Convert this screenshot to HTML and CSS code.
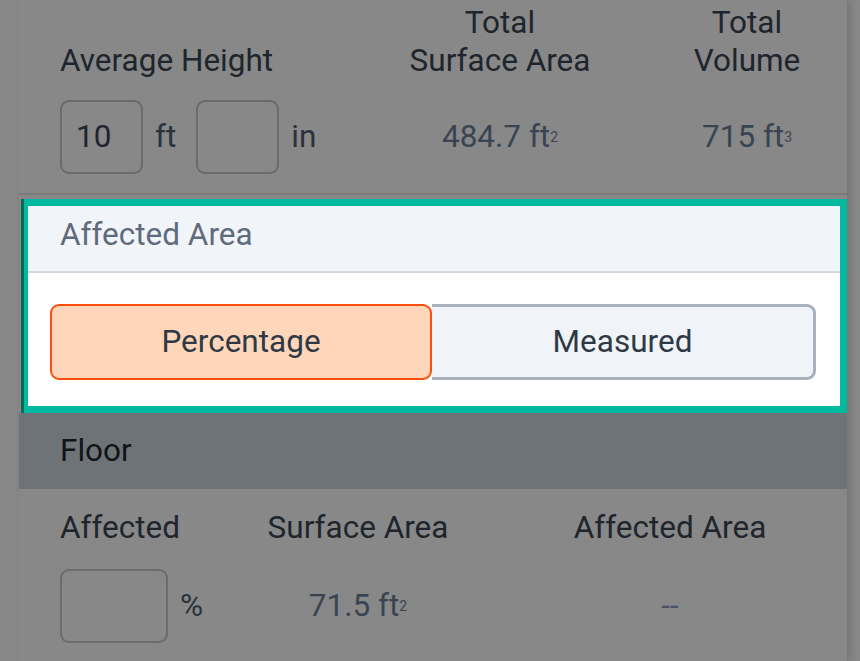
FILE: index.html
```html
<!DOCTYPE html>
<html>
<head>
<meta charset="utf-8">
<link rel="stylesheet" href="styles.css">
</head>
<body>
<div class="panel">
  <section class="dims">
    <div class="col c1">
      <div class="head">Average Height</div>
      <div class="vals">
        <div class="box box-sm"><span class="box-text">10</span></div>
        <span class="unit unit-ft">ft</span>
        <div class="box box-sm"></div>
        <span class="unit">in</span>
      </div>
    </div>
    <div class="col c2">
      <div class="head">Total<br>Surface Area</div>
      <div class="vals center"><span class="val">484.7 ft<sup>2</sup></span></div>
    </div>
    <div class="col c3">
      <div class="head">Total<br>Volume</div>
      <div class="vals center"><span class="val">715 ft<sup>3</sup></span></div>
    </div>
  </section>

  <div class="highlight">
    <div class="card">
      <div class="card-head">Affected Area</div>
      <div class="card-body">
        <div class="seg">
          <div class="seg-btn seg-active">Percentage</div>
          <div class="seg-btn seg-other">Measured</div>
        </div>
      </div>
    </div>
  </div>

  <div class="floor-head">Floor</div>

  <section class="floor">
    <div class="col b1">
      <div class="head">Affected</div>
      <div class="vals">
        <div class="box box-lg"></div>
        <span class="unit">%</span>
      </div>
    </div>
    <div class="col b2">
      <div class="head">Surface Area</div>
      <div class="vals center"><span class="val">71.5 ft<sup>2</sup></span></div>
    </div>
    <div class="col b3">
      <div class="head">Affected Area</div>
      <div class="vals center"><span class="val dash">--</span></div>
    </div>
  </section>
</div>
</body>
</html>
```

FILE: styles.css
```css
html, body {
  margin: 0;
  padding: 0;
}
body {
  background: #888888;
  font-family: Roboto, "Liberation Sans", sans-serif;
  font-size: 31.5px;
  line-height: 38px;
  color: #1e252c;
  width: 860px;
  height: 661px;
  overflow: hidden;
}
.panel {
  margin-left: 19px;
  width: 828px;
  background: #888888;
  box-shadow: 3px 0 8px rgba(0, 0, 0, 0.16);
  min-height: 661px;
}
.dims {
  display: flex;
  padding: 4px 0 19px 41px;
  border-bottom: 2px solid #7b7b7b;
  margin-bottom: 4px;
}
.col {
  display: flex;
  flex-direction: column;
}
.head {
  flex: 1;
  display: flex;
  align-items: flex-end;
}
.c1 { width: 340px; }
.c2 { width: 200px; text-align: center; }
.c3 { width: 140px; margin-left: 77px; text-align: center; }
.c2 .head, .c3 .head, .b2 .head, .b3 .head {
  justify-content: center;
}
.vals {
  height: 74px;
  margin-top: 20px;
  display: flex;
  align-items: center;
}
.vals.center {
  justify-content: center;
}
.box {
  box-sizing: border-box;
  height: 74px;
  border: 2px solid #6b6b6b;
  border-radius: 9px;
  display: flex;
  align-items: center;
}
.box-sm { width: 83px; }
.box-lg { width: 108px; }
.box-text {
  padding-left: 14px;
}
.unit {
  margin-left: 12px;
  color: #2a323b;
}
.unit-ft {
  margin-right: 20px;
}
.val {
  color: #3a4450;
}
.val sup {
  font-size: 14px;
  line-height: 0;
  vertical-align: 5px;
}
.dash {
  color: #4a5361;
}

.highlight {
  margin-left: 2px;
  border-left: 3px solid #0a6a58;
}
.card {
  border: 7px solid #00b99f;
  border-left-width: 4px;
  background: #ffffff;
}
.card-head {
  box-sizing: border-box;
  height: 67px;
  padding: 10px 0 0 32px;
  background: #f1f4f9;
  border-bottom: 2px solid #d3d9e2;
  color: #5f6b7c;
}
.card-body {
  padding: 31px 24px 26px 22px;
}
.seg {
  display: flex;
  height: 76px;
}
.seg-btn {
  box-sizing: border-box;
  display: flex;
  align-items: center;
  justify-content: center;
  color: #2e3946;
}
.seg-active {
  width: 382px;
  background: #ffd6b9;
  border: 2px solid #fc4f0e;
  border-radius: 9px;
}
.seg-other {
  width: 384px;
  background: #f0f4f9;
  border: 3px solid #a8b1bb;
  border-left: none;
  border-radius: 0 9px 9px 0;
}

.floor-head {
  height: 76px;
  display: flex;
  align-items: center;
  padding-left: 41px;
  background: #6e7378;
  color: #121416;
}
.floor {
  display: flex;
  padding: 20px 0 0 41px;
}
.floor .vals {
  margin-top: 22px;
}
.b1 { width: 198px; }
.b2 { width: 200px; text-align: center; }
.b3 { width: 200px; margin-left: 112px; text-align: center; }
```
